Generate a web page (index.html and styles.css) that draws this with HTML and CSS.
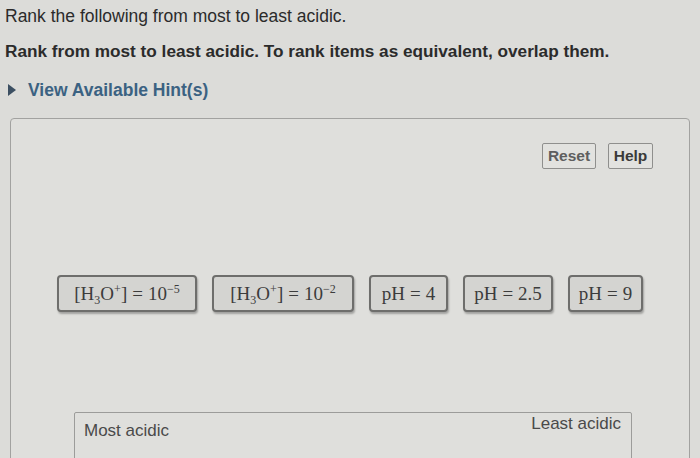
FILE: index.html
```html
<!DOCTYPE html>
<html>
<head>
<meta charset="utf-8">
<link rel="stylesheet" href="styles.css">
</head>
<body>
<div class="page">
  <p class="q1">Rank the following from most to least acidic.</p>
  <p class="q2">Rank from most to least acidic. To rank items as equivalent, overlap them.</p>
  <div class="hint"><span class="tri"></span><span class="hint-text">View Available Hint(s)</span></div>
  <div class="panel">
    <div class="tools">
      <button class="btn btn-reset">Reset</button>
      <button class="btn btn-help">Help</button>
    </div>
    <div class="items">
      <div class="item w1"><span class="math">[H<sub>3</sub>O<sup>+</sup>]<span class="eq">=</span>10<sup>−5</sup></span></div>
      <div class="item w2"><span class="math">[H<sub>3</sub>O<sup>+</sup>]<span class="eq">=</span>10<sup>−2</sup></span></div>
      <div class="item w3"><span class="math">pH<span class="eq">=</span>4</span></div>
      <div class="item w4"><span class="math">pH<span class="eq">=</span>2.5</span></div>
      <div class="item w5"><span class="math">pH<span class="eq">=</span>9</span></div>
    </div>
    <div class="rank">
      <span class="lbl most">Most acidic</span>
      <span class="lbl least">Least acidic</span>
    </div>
  </div>
</div>
</body>
</html>
```
FILE: styles.css
```css
html, body {
  margin: 0;
  padding: 0;
  background: #dcdcd9;
  overflow: hidden;
}
.page {
  width: 700px;
  height: 458px;
  font-family: "Liberation Sans", Arial, sans-serif;
  color: #2b2b2b;
}
.q1 {
  margin: 0;
  padding: 6px 0 0 5px;
  font-size: 17.5px;
  line-height: 20px;
}
.q2 {
  margin: 0;
  padding: 15px 0 0 5px;
  font-size: 17.2px;
  line-height: 20px;
  font-weight: bold;
}
.hint {
  display: flex;
  align-items: center;
  padding: 19px 0 0 8px;
  height: 20px;
}
.tri {
  width: 0;
  height: 0;
  border-top: 6px solid transparent;
  border-bottom: 6px solid transparent;
  border-left: 8px solid #3c4f62;
  margin-right: 12px;
}
.hint-text {
  font-size: 17.5px;
  font-weight: bold;
  color: #3b6282;
  line-height: 20px;
}
.panel {
  margin: 18px 10px 0 10px;
  height: 400px;
  border: 1px solid #a2a2a0;
  border-radius: 4px;
  background: #dfdfdc;
}
.tools {
  display: flex;
  justify-content: flex-end;
  gap: 12px;
  padding: 24px 36px 0 0;
}
.btn {
  height: 26px;
  box-sizing: border-box;
  border: 1px solid #8f8f8d;
  border-radius: 2px;
  background: #e2e2df;
  font-family: "Liberation Sans", Arial, sans-serif;
  font-weight: bold;
  font-size: 15.5px;
  padding: 0 4px;
  line-height: 24px;
}
.btn-reset {
  width: 54px;
  color: #5e5e5e;
}
.btn-help {
  width: 45px;
  color: #3a3a3a;
}
.items {
  display: flex;
  gap: 15px;
  padding: 106px 0 0 46px;
}
.item {
  height: 37px;
  box-sizing: border-box;
  border: 2px solid #6e6e6c;
  border-radius: 4px;
  background: #d4d4d1;
  box-shadow: 1px 2px 2px rgba(0, 0, 0, 0.28);
  display: flex;
  align-items: center;
  justify-content: center;
  white-space: nowrap;
}
.math {
  font-family: "Liberation Serif", "Times New Roman", serif;
  font-size: 19px;
  line-height: 20px;
  color: #3c3c3c;
}
.math sub, .math sup {
  font-size: 12px;
  line-height: 0;
}
.math sub {
  vertical-align: -4px;
}
.math sup {
  vertical-align: 7px;
}
.eq {
  padding: 0 5px;
}
.w1 { width: 140px; }
.w2 { width: 142px; }
.w3 { width: 79px; }
.w4 { width: 90px; }
.w5 { width: 75px; }
.rank {
  margin: 100px 0 0 63px;
  width: 558px;
  height: 80px;
  box-sizing: border-box;
  border: 1px solid #9c9c9a;
  border-radius: 2px;
  display: flex;
  justify-content: space-between;
  align-items: flex-start;
  padding: 0 10px 0 9px;
}
.lbl {
  font-size: 17px;
  line-height: 20px;
  color: #4a4a4a;
}
.most {
  margin-top: 8px;
}
.least {
  margin-top: 1px;
}
```
